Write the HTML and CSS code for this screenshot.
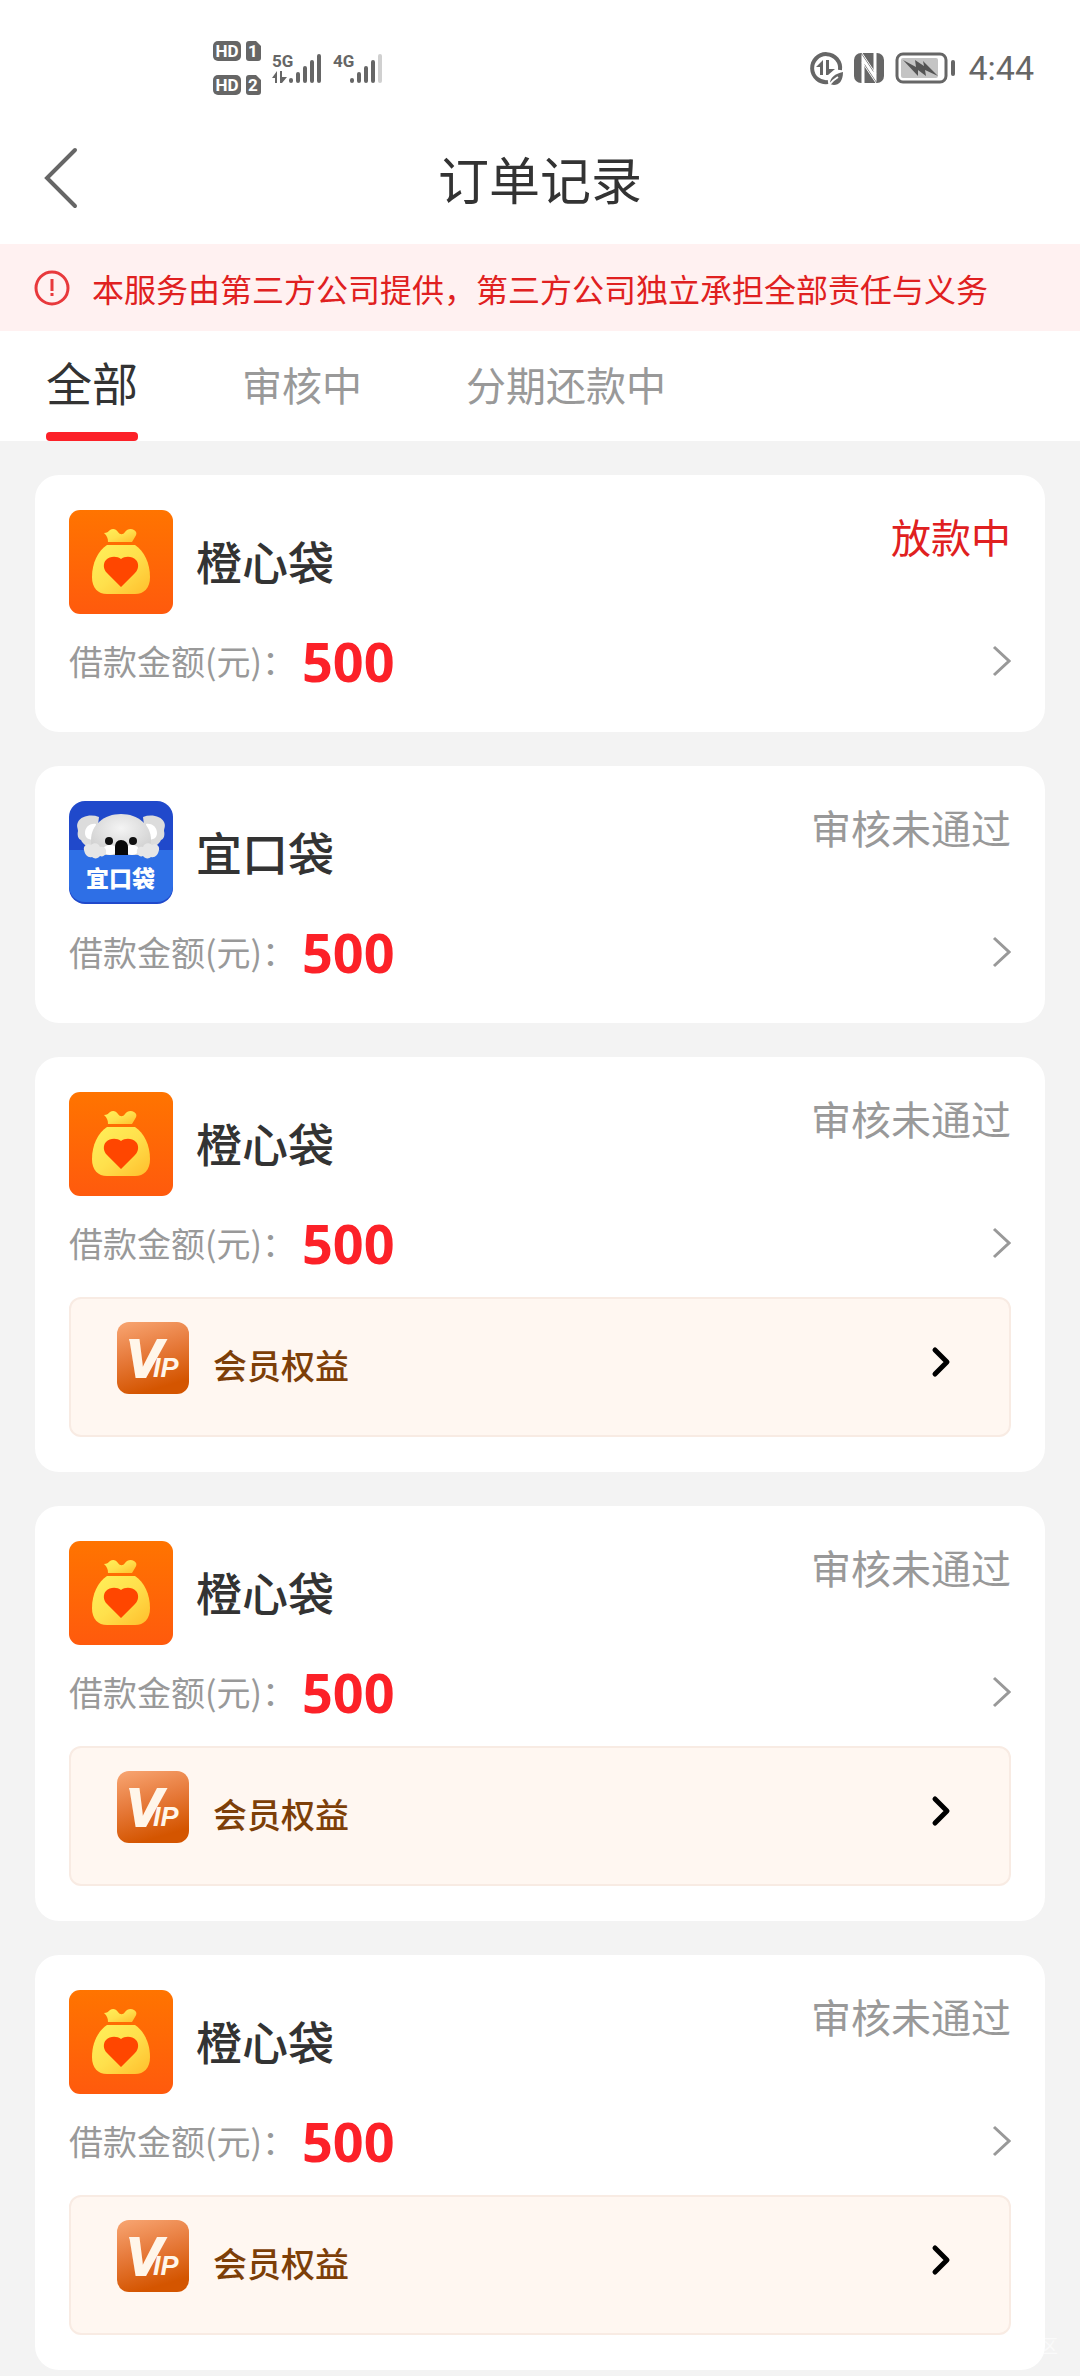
FILE: index.html
```html
<!DOCTYPE html>
<html lang="zh-CN">
<head>
    <meta charset="UTF-8">
    <meta name="viewport" content="width=device-width, initial-scale=1.0">
    <title>订单记录</title>
    <link rel="stylesheet" href="styles.css">
</head>
<body>
    <!-- Shared icons -->
    <svg class="sprite" aria-hidden="true">
        <defs>
            <linearGradient id="orangeBg" x1="0" y1="0" x2="0" y2="1">
                <stop offset="0" stop-color="#ff7400"/>
                <stop offset="1" stop-color="#ff5a0d"/>
            </linearGradient>
            <linearGradient id="bagFill" x1="0" y1="0" x2="1" y2="1">
                <stop offset="0" stop-color="#fff05a"/>
                <stop offset="0.5" stop-color="#ffe04c"/>
                <stop offset="1" stop-color="#ffbe2c"/>
            </linearGradient>
            <linearGradient id="vipBg" x1="0" y1="0" x2="0.3" y2="1">
                <stop offset="0" stop-color="#f8a673"/>
                <stop offset="0.5" stop-color="#e77b3c"/>
                <stop offset="1" stop-color="#d45500"/>
            </linearGradient>
            <radialGradient id="fur" cx="0.5" cy="0.35" r="0.65">
                <stop offset="0" stop-color="#f4f4f4"/>
                <stop offset="1" stop-color="#cfcfcf"/>
            </radialGradient>
        </defs>
        <symbol id="icon-bag" viewBox="0 0 104 104">
            <rect width="104" height="104" rx="11" fill="url(#orangeBg)"/>
            <path d="M35 23c3 0 4-1 6-3 3-2 6-1 8 2 2 3 5 3 7 0 2-3 6-4 9-2 3 2 3 4 1 7l-3 5H39c0-4-1-6-4-9z" fill="url(#bagFill)"/>
            <path d="M38 35h28c9 6 15 18 15 32 0 11-6 17-15 17H38c-9 0-15-6-15-17 0-14 6-26 15-32z" fill="url(#bagFill)"/>
            <path d="M52 77L38 63c-4-4-4-10-1-13 4-4 11-4 15-1 4-3 11-3 15 1 3 3 3 9-1 13z" fill="#ff4600"/>
        </symbol>
        <symbol id="icon-right" viewBox="0 0 20 32">
            <path d="M3 2l15 14L3 30" fill="none" stroke="#999" stroke-width="3"/>
        </symbol>
        <symbol id="icon-right-bold" viewBox="0 0 20 32">
            <path d="M4 4l12 12L4 28" fill="none" stroke="#000" stroke-width="5" stroke-linecap="round" stroke-linejoin="round"/>
        </symbol>
    </svg>

    <div class="status-bar">
        <div class="status-group">
            <svg width="48" height="54" viewBox="0 0 48 54" fill="#666">
                <rect width="28" height="20" rx="5"/>
                <path d="M36 0h7l5 5v12q0 3-3 3h-9q-3 0-3-3V3q0-3 3-3z"/>
                <rect y="34" width="28" height="20" rx="5"/>
                <path d="M36 34h7l5 5v12q0 3-3 3h-9q-3 0-3-3V37q0-3 3-3z"/>
                <g class="badge-text">
                    <text x="14" y="16">HD</text>
                    <text x="40" y="16">1</text>
                    <text x="14" y="50">HD</text>
                    <text x="40" y="50">2</text>
                </g>
            </svg>
            <svg width="50" height="32" viewBox="0 0 50 32" fill="#666">
                <text x="0" y="15" class="net-text">5G</text>
                <path d="M0 26l5-7v12H3v-5zM8 19h2v6h5l-5 6H8z"/>
                <path d="M19 28v1M26 22v7M33 16v13M40 10v19M47 4v25" stroke="#666" stroke-width="4" stroke-linecap="round"/>
            </svg>
            <svg width="50" height="32" viewBox="0 0 50 32" fill="#666">
                <text x="0" y="15" class="net-text">4G</text>
                <path d="M19 28v1M26 22v7M33 16v13M40 10v19" stroke="#666" stroke-width="4" stroke-linecap="round"/>
                <path d="M47 4v25" stroke="#d0d0d0" stroke-width="4" stroke-linecap="round"/>
            </svg>
        </div>
        <div class="status-group status-right">
            <svg width="34" height="34" viewBox="0 0 34 34">
                <path d="M31 19A14 14 0 1 0 19 31" fill="none" stroke="#666" stroke-width="4"/>
                <path d="M14 9v15h-3v-8H7zM17 9h3v9h6l-7 6h-2z" fill="#666"/>
                <path d="M34 21c0 9-4 13-9 13-2 0-3-1-4-1 0-7 5-10 13-12z" fill="#666"/>
                <path d="M20 34q4-5 9-8" stroke="#fff" stroke-width="2" fill="none"/>
            </svg>
            <svg width="30" height="30" viewBox="0 0 30 30">
                <rect width="30" height="30" rx="7" fill="#666"/>
                <path d="M9 30V6l12 18V0" fill="none" stroke="#fff" stroke-width="3"/>
                <path d="M8 0l14 21M8 9l14 21" fill="none" stroke="#fff" stroke-width="1"/>
            </svg>
            <svg width="62" height="32" viewBox="0 0 62 32">
                <rect x="2" y="2" width="49" height="28" rx="6" fill="none" stroke="#666" stroke-width="3"/>
                <rect x="6" y="6" width="37" height="20" rx="2" fill="#c4c4c4"/>
                <path d="M8 8l13 7-1-7 9 6-1-5 15 15-13-6 1 6-8-6v6z" fill="#555"/>
                <rect x="56" y="8" width="4" height="16" rx="2" fill="#666"/>
            </svg>
            <span class="time">4:44</span>
        </div>
    </div>

    <header class="header">
        <button class="back" type="button" aria-label="返回">
            <svg width="36" height="64" viewBox="0 0 36 64"><path d="M32 4L4 32l28 28" fill="none" stroke="#666" stroke-width="4" stroke-linecap="round"/></svg>
        </button>
        <h1>订单记录</h1>
    </header>

    <div class="notice">
        <svg width="36" height="36" viewBox="0 0 36 36">
            <circle cx="18" cy="18" r="16" fill="none" stroke="#e8393c" stroke-width="3"/>
            <path d="M18 9v12M18 23v3" stroke="#e8393c" stroke-width="3"/>
        </svg>
        <p>本服务由第三方公司提供，第三方公司独立承担全部责任与义务</p>
    </div>

    <nav class="tabs">
        <a class="tab active" href="#">全部</a>
        <a class="tab" href="#">审核中</a>
        <a class="tab" href="#">分期还款中</a>
    </nav>

    <main class="orders">
        <article class="card">
            <div class="card-top">
                <svg class="logo"><use href="#icon-bag"/></svg>
                <h2>橙心袋</h2>
                <span class="state lending">放款中</span>
            </div>
            <a class="amount-row" href="#">
                <span class="label">借款金额(元)：</span>
                <strong>500</strong>
                <svg class="arrow"><use href="#icon-right"/></svg>
            </a>
        </article>

        <article class="card">
            <div class="card-top">
                <svg class="logo" viewBox="0 0 104 104">
                    <rect width="104" height="103" rx="16" fill="#2049cb"/>
                    <path d="M0 49h104v36c0 9-7 16-16 16H16C7 101 0 94 0 85z" fill="#2e6fe6"/>
                    <path d="M30 16c-8-3-18-1-21 5-2 4 0 6 0 9-1 4 0 8 3 9 2 5 8 8 14 8z" fill="#dcdcdc"/>
                    <path d="M74 16c8-3 18-1 21 5 2 4 0 6 0 9 1 4 0 8-3 9-2 5-8 8-14 8z" fill="#dcdcdc"/>
                    <path d="M27 23c-7-1-11 4-11 9s4 7 9 7zM77 23c7-1 11 4 11 9s-4 7-9 7z" fill="#fff"/>
                    <path d="M52 13c17 0 30 11 30 26 0 8-3 15-7 15H29c-4 0-7-7-7-15 0-15 13-26 30-26z" fill="url(#fur)"/>
                    <ellipse cx="41" cy="49" rx="7" ry="5" fill="#fff"/>
                    <ellipse cx="63" cy="49" rx="7" ry="5" fill="#fff"/>
                    <circle cx="40" cy="40" r="4" fill="#111"/>
                    <circle cx="64" cy="40" r="4" fill="#111"/>
                    <path d="M46 54v-8c0-4 2-7 6-7s7 3 7 7v8z" fill="#080808"/>
                    <path d="M15 49c-1-4 3-7 7-5 3-3 8-2 9 2 4-1 7 2 6 6-1 3-4 4-6 3-2 3-6 3-8 1-4 1-7-2-8-7z" fill="#e6e6e6"/>
                    <path d="M90 49c1-4-3-7-7-5-3-3-8-2-9 2-4-1-7 2-6 6 1 3 4 4 6 3 2 3 6 3 8 1 4 1 7-2 8-7z" fill="#e6e6e6"/>
                    <text x="17" y="86" class="koala-text">宜口袋</text>
                </svg>
                <h2>宜口袋</h2>
                <span class="state">审核未通过</span>
            </div>
            <a class="amount-row" href="#">
                <span class="label">借款金额(元)：</span>
                <strong>500</strong>
                <svg class="arrow"><use href="#icon-right"/></svg>
            </a>
        </article>

        <article class="card">
            <div class="card-top">
                <svg class="logo"><use href="#icon-bag"/></svg>
                <h2>橙心袋</h2>
                <span class="state">审核未通过</span>
            </div>
            <a class="amount-row" href="#">
                <span class="label">借款金额(元)：</span>
                <strong>500</strong>
                <svg class="arrow"><use href="#icon-right"/></svg>
            </a>
            <a class="vip" href="#">
                <svg class="vip-logo" viewBox="0 0 72 72">
                    <rect width="72" height="72" rx="12" fill="url(#vipBg)"/>
                    <path d="M12 17h10v5h-8z" fill="#fff6ea"/>
                    <text x="9" y="55" class="vip-text"><tspan class="vip-v">V</tspan><tspan x="36">IP</tspan></text>
                </svg>
                <span>会员权益</span>
                <svg class="arrow"><use href="#icon-right-bold"/></svg>
            </a>
        </article>

        <article class="card">
            <div class="card-top">
                <svg class="logo"><use href="#icon-bag"/></svg>
                <h2>橙心袋</h2>
                <span class="state">审核未通过</span>
            </div>
            <a class="amount-row" href="#">
                <span class="label">借款金额(元)：</span>
                <strong>500</strong>
                <svg class="arrow"><use href="#icon-right"/></svg>
            </a>
            <a class="vip" href="#">
                <svg class="vip-logo" viewBox="0 0 72 72">
                    <rect width="72" height="72" rx="12" fill="url(#vipBg)"/>
                    <path d="M12 17h10v5h-8z" fill="#fff6ea"/>
                    <text x="9" y="55" class="vip-text"><tspan class="vip-v">V</tspan><tspan x="36">IP</tspan></text>
                </svg>
                <span>会员权益</span>
                <svg class="arrow"><use href="#icon-right-bold"/></svg>
            </a>
        </article>

        <article class="card">
            <div class="card-top">
                <svg class="logo"><use href="#icon-bag"/></svg>
                <h2>橙心袋</h2>
                <span class="state">审核未通过</span>
            </div>
            <a class="amount-row" href="#">
                <span class="label">借款金额(元)：</span>
                <strong>500</strong>
                <svg class="arrow"><use href="#icon-right"/></svg>
            </a>
            <a class="vip" href="#">
                <svg class="vip-logo" viewBox="0 0 72 72">
                    <rect width="72" height="72" rx="12" fill="url(#vipBg)"/>
                    <path d="M12 17h10v5h-8z" fill="#fff6ea"/>
                    <text x="9" y="55" class="vip-text"><tspan class="vip-v">V</tspan><tspan x="36">IP</tspan></text>
                </svg>
                <span>会员权益</span>
                <svg class="arrow"><use href="#icon-right-bold"/></svg>
            </a>
        </article>
        <span class="watermark">区</span>
    </main>
</body>
</html>
```

FILE: styles.css
```css
* {
    margin: 0;
    padding: 0;
    box-sizing: border-box;
}

body {
    font-family: "Noto Sans CJK SC", sans-serif;
    background: #f3f3f3;
    color: #333;
}

a {
    color: inherit;
    text-decoration: none;
}

svg {
    display: block;
    flex-shrink: 0;
}

.sprite {
    position: absolute;
    width: 0;
    height: 0;
}

/* Status bar */
.status-bar {
    display: flex;
    align-items: center;
    justify-content: space-between;
    height: 116px;
    padding: 20px 46px 0 213px;
    background: #fff;
}

.status-group {
    display: flex;
    align-items: center;
    gap: 11px;
}

.time {
    font-family: Roboto, sans-serif;
    font-size: 34px;
    line-height: 40px;
    color: #666;
}

.badge-text {
    font-family: Roboto, sans-serif;
    font-size: 17px;
    font-weight: 700;
    fill: #fff;
    text-anchor: middle;
}

.net-text {
    font-family: "Liberation Sans Narrow", Roboto, sans-serif;
    font-size: 17px;
    font-weight: 700;
}

/* Title bar */
.header {
    display: grid;
    grid-template-columns: 80px 1fr 80px;
    align-items: center;
    height: 128px;
    padding-bottom: 4px;
    background: #fff;
}

.back {
    padding-left: 43px;
    border: none;
    background: none;
    cursor: pointer;
}

.header h1 {
    font-size: 51px;
    font-weight: 400;
    line-height: 64px;
    text-align: center;
}

.notice {
    display: flex;
    align-items: center;
    gap: 22px;
    height: 87px;
    padding: 0 34px;
    background: #fff1f1;
    color: #e02020;
}

.notice p {
    font-size: 32px;
    line-height: 44px;
    white-space: nowrap;
}

.tabs {
    display: flex;
    gap: 104px;
    height: 110px;
    padding: 0 46px;
    background: #fff;
}

.tab {
    font-size: 40px;
    line-height: 106px;
    color: #999;
}

.tab.active {
    display: flex;
    flex-direction: column;
    font-size: 46px;
    line-height: 101px;
    color: #333;
}

.tab.active::after {
    content: "";
    height: 9px;
    border-radius: 4px;
    background: #fc2128;
}

/* Order cards */
.orders {
    position: relative;
    display: flex;
    flex-direction: column;
    gap: 34px;
    padding: 34px 35px 6px;
}

.card {
    padding: 35px 34px;
    border-radius: 24px;
    background: #fff;
}

.card-top {
    display: flex;
    align-items: center;
    gap: 23px;
    height: 104px;
}

.logo {
    width: 104px;
    height: 104px;
}

.card h2 {
    padding-bottom: 4px;
    font-size: 46px;
    font-weight: 500;
    line-height: 60px;
}

.state {
    align-self: flex-start;
    margin-left: auto;
    font-size: 40px;
    line-height: 52px;
    color: #999;
}

.state.lending {
    color: #e02020;
}

.amount-row {
    display: flex;
    align-items: center;
    height: 70px;
    margin-top: 13px;
    padding-bottom: 3px;
}

.label {
    font-size: 34px;
    color: #999;
}

.amount-row strong {
    margin-left: 6px;
    font-family: "Noto Sans", sans-serif;
    font-size: 54px;
    line-height: 64px;
    color: #fc2128;
}

.arrow {
    width: 20px;
    height: 32px;
    margin-left: auto;
}

.vip {
    display: flex;
    align-items: center;
    gap: 24px;
    height: 140px;
    margin-top: 18px;
    padding: 0 58px 6px 46px;
    border: 2px solid #f8ebe3;
    border-radius: 12px;
    background: #fff7f1;
    color: #7d3f08;
    font-size: 34px;
    font-weight: 500;
}

.vip .arrow {
    margin-bottom: 4px;
}

.vip-logo {
    width: 72px;
    height: 72px;
    margin-bottom: 12px;
}

/* Lettering inside the logos */
.vip-text {
    font-family: "Liberation Sans", sans-serif;
    font-size: 27px;
    font-style: italic;
    font-weight: 700;
    fill: #fff6ea;
}

.vip-v {
    font-size: 54px;
    stroke: #fff6ea;
    stroke-width: 2px;
}

.koala-text {
    font-size: 23px;
    font-weight: 900;
    fill: #fff;
}

.watermark {
    position: absolute;
    right: 22px;
    bottom: 18px;
    font-size: 18px;
    line-height: 26px;
    color: rgba(255, 255, 255, 0.6);
}
```
